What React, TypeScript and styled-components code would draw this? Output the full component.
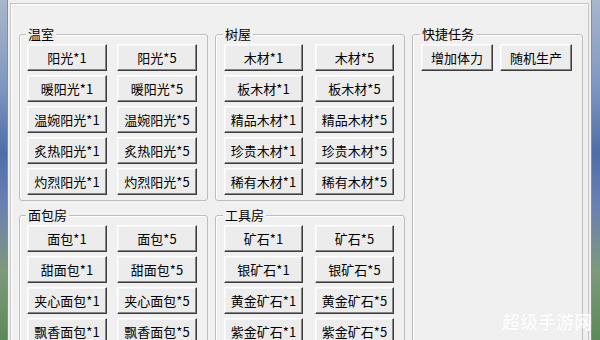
import React from "react";
import styled, { createGlobalStyle } from "styled-components";

const Global = createGlobalStyle`
  html, body { margin: 0; padding: 0; background: #f0f0f0; }
  body {
    width: 600px;
    height: 340px;
    overflow: hidden;
    font-family: "Noto Sans CJK SC", "Noto Sans", sans-serif;
  }
`;

const Desktop = styled.div`
  position: relative;
  width: 600px;
  height: 340px;
  overflow: hidden;
  display: flex;
  background: linear-gradient(
    180deg,
    #a8b6cc 0%,
    #7f98c2 25%,
    #4f6ea8 45%,
    #6a7fb4 60%,
    #7d9a7a 80%,
    #5b8a58 100%
  );
`;

const Window = styled.div`
  margin-left: 7px;
  width: 585px;
  height: 100%;
  box-sizing: border-box;
  background: #efefef;
  border-left: 1px solid #8c8c8c;
  border-right: 1px solid #8c8c8c;
  padding: 3px 2px 0 2px;
  overflow: hidden;
`;

const Frame = styled.div`
  box-sizing: border-box;
  min-height: 420px;
  background: #f0f0f0;
  border: 1px solid #c4c4c4;
  box-shadow: inset 1px 1px 0 #ffffff;
  padding: 23px 5px 0 8px;
  display: grid;
  grid-template-columns: 189px 190px 171px;
  grid-template-rows: auto auto;
  align-content: start;
  column-gap: 7px;
  row-gap: 7px;
`;

const Group = styled.fieldset<{ $padX: number; $col: number; $row: string }>`
  margin: 0;
  min-width: 0;
  box-sizing: border-box;
  padding: 3px 0 5px ${(p) => p.$padX}px;
  border: 1px solid #bdbdbd;
  border-radius: 3px;
  box-shadow: inset 1px 1px 0 #ffffff;
  grid-column: ${(p) => p.$col};
  grid-row: ${(p) => p.$row};
`;

const Legend = styled.legend`
  padding: 0 2px;
  margin-left: -1px;
  font-size: 13px;
  line-height: 14px;
  color: #000;
  background: #f0f0f0;
`;

const ButtonGrid = styled.div<{ $w: number; $gap: number }>`
  display: grid;
  grid-template-columns: repeat(2, ${(p) => p.$w}px);
  column-gap: ${(p) => p.$gap}px;
  row-gap: 4px;
`;

const Btn = styled.button`
  height: 27px;
  padding: 0;
  margin: 0;
  box-sizing: border-box;
  background: #ececec;
  border: 1px solid;
  border-color: #ffffff #3c3c3c #3c3c3c #ffffff;
  box-shadow: inset -1px -1px 0 #858585, inset 1px 1px 0 #f6f6f6;
  font-family: "Noto Sans CJK SC", "Noto Sans", sans-serif;
  font-size: 13px;
  line-height: 14px;
  color: #000;
  white-space: nowrap;
  overflow: hidden;
  cursor: default;
`;

const Watermark = styled.div`
  position: absolute;
  right: 8px;
  bottom: 9px;
  font-family: "Noto Sans CJK SC", sans-serif;
  font-size: 18px;
  font-weight: 700;
  line-height: 20px;
  color: rgba(255, 255, 255, 0.92);
  text-shadow: 0 0 1px rgba(210, 210, 210, 0.5);
`;

type GroupDef = {
  title: string;
  items: string[];
  padX: number;
  w: number;
  gap: number;
  col: number;
  row: string;
};

const pairs = (names: string[]) => names.flatMap((n) => [`${n}*1`, `${n}*5`]);

const groups: GroupDef[] = [
  {
    title: "温室",
    items: pairs(["阳光", "暖阳光", "温婉阳光", "炙热阳光", "灼烈阳光"]),
    padX: 7,
    w: 80,
    gap: 10,
    col: 1,
    row: "1",
  },
  {
    title: "树屋",
    items: pairs(["木材", "板木材", "精品木材", "珍贵木材", "稀有木材"]),
    padX: 8,
    w: 79,
    gap: 12,
    col: 2,
    row: "1",
  },
  {
    title: "快捷任务",
    items: ["增加体力", "随机生产"],
    padX: 8,
    w: 72,
    gap: 7,
    col: 3,
    row: "1 / span 2",
  },
  {
    title: "面包房",
    items: pairs(["面包", "甜面包", "夹心面包", "飘香面包"]),
    padX: 7,
    w: 80,
    gap: 10,
    col: 1,
    row: "2",
  },
  {
    title: "工具房",
    items: pairs(["矿石", "银矿石", "黄金矿石", "紫金矿石"]),
    padX: 8,
    w: 79,
    gap: 12,
    col: 2,
    row: "2",
  },
];

export default function App() {
  return (
    <>
      <Global />
      <Desktop>
        <Window>
          <Frame>
            {groups.map((g) => (
              <Group key={g.title} $padX={g.padX} $col={g.col} $row={g.row}>
                <Legend>{g.title}</Legend>
                <ButtonGrid $w={g.w} $gap={g.gap}>
                  {g.items.map((it) => (
                    <Btn key={it} type="button">
                      {it}
                    </Btn>
                  ))}
                </ButtonGrid>
              </Group>
            ))}
          </Frame>
        </Window>
        <Watermark>超级手游网</Watermark>
      </Desktop>
    </>
  );
}
